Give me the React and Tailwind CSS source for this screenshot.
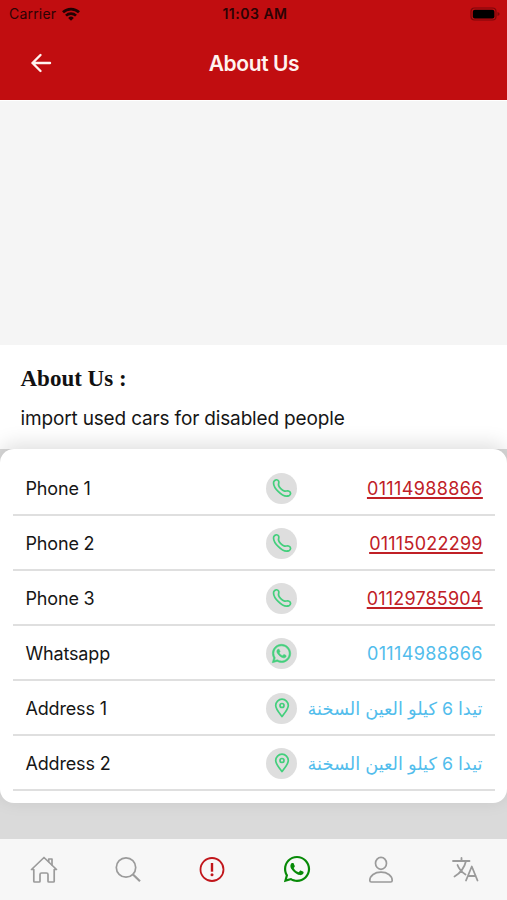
import { FaWhatsapp } from "react-icons/fa";

function PhoneIcon() {
  return (
    <svg viewBox="0 0 20 20" className="size-5" fill="none" stroke="#43cf7c" strokeWidth="1.700" strokeLinejoin="round">
      <path d="M1.800 3.600C2.600 1.500 5.600 1 6.600 3.200C7.300 4.700 6.300 5.600 6.500 7C6.900 9.200 10 12.400 12.600 13.100C14 13.400 15 12.600 16.500 13C19 13.800 19.200 16.600 17.200 17.600C14.200 18.900 9.800 17.200 6.400 13.700C3 10.300 1 6.300 1.800 3.600Z" />
    </svg>
  );
}

function PinIcon() {
  return (
    <svg viewBox="0 0 20 20" className="size-5" fill="none" stroke="#43cf7c" strokeWidth="1.700" strokeLinejoin="round">
      <path d="M10 18.600C7.600 15.400 3.700 11 3.700 7.500a6.300 6.300 0 0 1 12.600 0C16.300 11 12.400 15.400 10 18.600Z" />
      <circle cx="10" cy="7.500" r="2" />
    </svg>
  );
}

const rows = [
  { label: "Phone 1", value: "01114988866", type: "phone", vt: "tracking-[0.37px] -mr-[0.37px]" },
  { label: "Phone 2", value: "01115022299", type: "phone", vt: "tracking-[0.25px] -mr-[0.25px]" },
  { label: "Phone 3", value: "01129785904", type: "phone", vt: "tracking-[0.18px] -mr-[0.18px]" },
  { label: "Whatsapp", value: "01114988866", type: "whatsapp", vt: "tracking-[0.37px] -mr-[0.37px]" },
  { label: "Address 1", value: "تيدا 6 كيلو العين السخنة", type: "pin" },
  { label: "Address 2", value: "تيدا 6 كيلو العين السخنة", type: "pin" },
];

function Row({ row }) {
  return (
    <div className="flex h-[55px] items-center border-b-2 border-[#dfdfdf] pt-px pr-[12.5px] pl-[12.5px]">
      <span className="w-[240.5px] pt-px text-[18px] tracking-[-0.17px] whitespace-nowrap text-[#161616]">{row.label}</span>
      <span className="flex size-[31px] shrink-0 items-center justify-center rounded-full bg-[#dedede]">
        {row.type === "phone" && <PhoneIcon />}
        {row.type === "whatsapp" && <FaWhatsapp className="size-[21px] text-[#43cf7c]" strokeWidth="14" stroke="currentColor" overflow="visible" />}
        {row.type === "pin" && <PinIcon />}
      </span>
      {row.type === "pin" ? (
        <span dir="rtl" className="flex-1 pt-[3px] font-['Inter','DejaVu_Sans',sans-serif] text-[17.8px] whitespace-nowrap text-[#52bdec]">
          {row.value}
        </span>
      ) : (
        <span className={`flex-1 pt-px text-right text-[18px] ${row.vt} ${row.type === "phone" ? "text-[#c02026] underline decoration-[1.5px] underline-offset-2" : "text-[#52bdec]"}`}>
          {row.value}
        </span>
      )}
    </div>
  );
}

function StatusBar() {
  return (
    <div className="grid h-[27px] grid-cols-3 items-center pr-[6px] pl-[9px] text-[#2c0304]">
      <div className="flex items-center gap-[6px]">
        <span className="text-[14px] tracking-[0.2px]">Carrier</span>
        <svg viewBox="0 0 18 14" className="h-[14px] w-[18px]" fill="none" stroke="#210203" strokeWidth="2.700">
          <path d="M1 5.300a11.500 11.500 0 0 1 16 0M4 8.600a7.200 7.200 0 0 1 10 0" />
          <path d="M9 13.700 6.200 10.900a4 4 0 0 1 5.600 0Z" fill="#210203" stroke="none" />
        </svg>
      </div>
      <span className="text-center text-[14px] font-semibold tracking-[0.5px] whitespace-nowrap">11:03 AM</span>
      <svg viewBox="0 0 31 14" className="h-[14px] w-[31px] justify-self-end">
        <rect x="1" y="1" width="25" height="12" rx="3.500" fill="none" stroke="#7d070a" strokeWidth="1.200" />
        <rect x="2.800" y="2.800" width="21.600" height="8.600" rx="2" fill="#000" />
        <path d="M27.500 5v4c1.400-.5 2-1 2-2s-.6-1.500-2-2Z" fill="#7d070a" />
      </svg>
    </div>
  );
}

function TabBar() {
  return (
    <nav className="grid h-[61px] grid-cols-6 items-center justify-items-center bg-[#f7f7f7] pl-[2px] text-[#9b9b9b]">
      <svg viewBox="0 0 28 28" className="size-7" fill="none" stroke="currentColor" strokeWidth="1.700" strokeLinecap="round" strokeLinejoin="round">
        <path d="M1.500 13.500 14 1.500 26.500 13.500h-2.300V25.200q0 .8-.8.8h-4.600q-.8 0-.8-.8V18.500q0-1.500-1.500-1.500h-5q-1.500 0-1.500 1.500v6.700q0 .8-.8.8H4.600q-.8 0-.8-.8V13.500Z" />
        <path d="M18.700 5.500V3h3.300v5.700" />
      </svg>
      <svg viewBox="0 0 28 28" className="size-7" fill="none" stroke="currentColor" strokeWidth="1.700">
        <circle cx="12" cy="11.500" r="9.700" />
        <path d="m19 18.500 7 6.800" strokeWidth="2.200" />
      </svg>
      <svg viewBox="0 0 28 28" className="size-7" fill="none" stroke="#c1161b">
        <circle cx="14" cy="13.500" r="11.500" strokeWidth="1.800" />
        <path d="M14 7v8.700" strokeWidth="2.400" />
        <circle cx="14" cy="18.800" r="1.500" fill="#c1161b" stroke="none" />
      </svg>
      <FaWhatsapp className="size-[30px] -translate-y-[1px] text-[#078a07]" />
      <svg viewBox="0 0 28 28" className="size-7" fill="none" stroke="currentColor" strokeWidth="1.700" strokeLinejoin="round">
        <ellipse cx="14" cy="7.300" rx="5.500" ry="6" />
        <path d="M2.800 24.500c0-5 5-8.300 11.200-8.300s11.200 3.300 11.200 8.300q0 1.500-1.500 1.500H4.300q-1.500 0-1.500-1.500Z" />
      </svg>
      <svg viewBox="0 0 28 28" className="size-7" fill="none" stroke="currentColor" strokeWidth="1.800" strokeLinecap="round" strokeLinejoin="round">
        <path d="M2 5h16.500M10.500 2v3M15 5C13.500 11.500 9.500 17 3.500 20.500M6.500 9c1.500 4 4 7 8 9.500M15 24.500l5.800-14L26.500 24.500M17 20h7.700" />
      </svg>
    </nav>
  );
}

export default function App() {
  return (
    <div className="flex h-[900px] w-[507px] flex-col overflow-hidden bg-[#dadada] font-['Inter',sans-serif]">
      <header className="h-[100px] shrink-0 bg-[#c10d10]">
        <StatusBar />
        <div className="grid h-[73px] grid-cols-[60px_1fr_60px] items-center">
          <svg viewBox="0 0 22 22" className="mb-[1px] ml-[30px] size-[22px]" fill="none" stroke="#fff3ef" strokeWidth="2.400" strokeLinecap="round" strokeLinejoin="round">
            <path d="M20 11H2.500M10.500 3l-8 8 8 8" />
          </svg>
          <h1 className="pl-[1px] text-center text-[21px] font-semibold tracking-[-0.4px] text-[#fff3ef]">About Us</h1>
        </div>
      </header>
      <div className="h-[245px] shrink-0 border-t border-white bg-[#f5f5f5]" />
      <section className="h-[103.5px] shrink-0 bg-white px-[20.5px] pt-[20px]">
        <h2 className="font-['Liberation_Serif',serif] text-[23px] leading-[28px] font-bold text-[#111]">About Us :</h2>
        <p className="mt-[12px] text-[19px] leading-[28px] tracking-[-0.16px] whitespace-nowrap text-[#161616]">import used cars for disabled people</p>
      </section>
      <main className="h-[354.5px] shrink-0 rounded-[14px] bg-white pr-[12px] pl-[13px] pt-[12.5px] shadow-[0_-5px_20px_rgba(0,0,0,0.13)]">
        {rows.map((row) => (
          <Row key={row.label} row={row} />
        ))}
      </main>
      <div className="flex-1" />
      <TabBar />
    </div>
  );
}
